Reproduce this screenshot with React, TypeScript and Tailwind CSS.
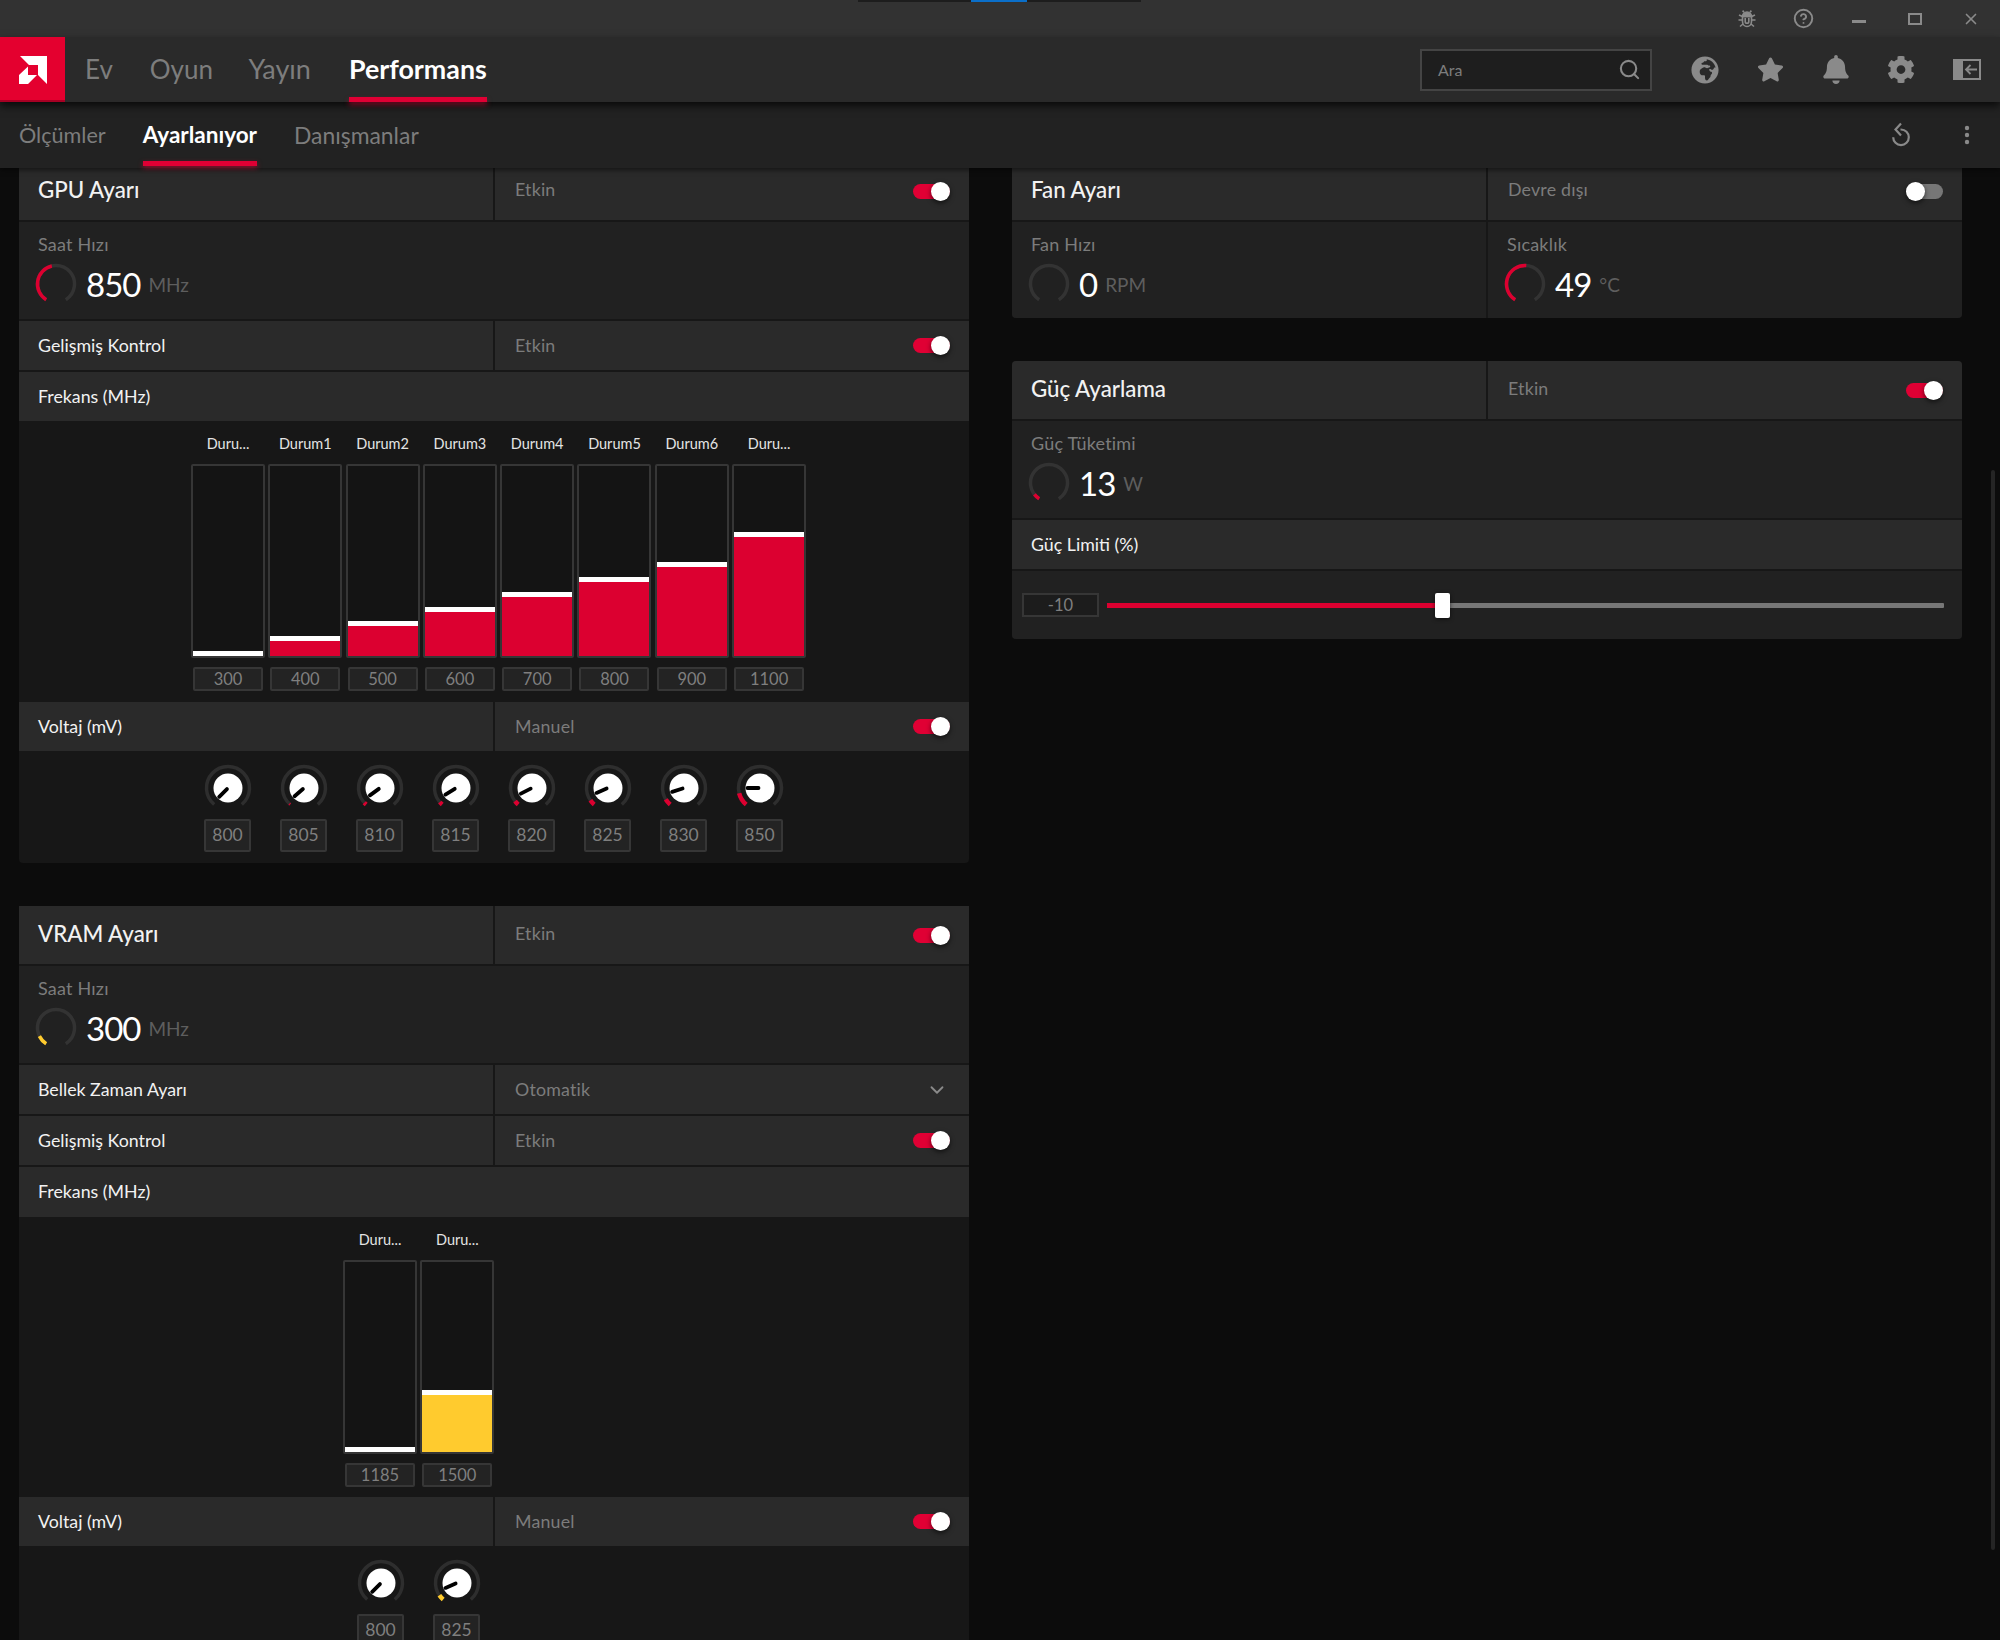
import React from "react";
import { Search, ChevronDown, CircleHelp, X } from "lucide-react";
import { FaGlobeAfrica, FaStar, FaBell, FaCog } from "react-icons/fa";

const polar = (cx: number, cy: number, r: number, deg: number) => {
  const a = ((deg - 90) * Math.PI) / 180;
  return [cx + r * Math.cos(a), cy + r * Math.sin(a)];
};
const arc = (cx: number, cy: number, r: number, from: number, to: number) => {
  const [x1, y1] = polar(cx, cy, r, from);
  const [x2, y2] = polar(cx, cy, r, to);
  const large = to - from > 180 ? 1 : 0;
  return `M${x1} ${y1}A${r} ${r} 0 ${large} 1 ${x2} ${y2}`;
};

function Gauge({ sweep, color }: { sweep: number; color: string }) {
  return (
    <svg width="42" height="42" viewBox="0 0 42 42" className="shrink-0">
      <path d={arc(21, 21, 18.5, 212, 508)} fill="none" stroke="#333333" strokeWidth="3.5" />
      {sweep > 0 && <path d={arc(21, 21, 18.5, 212, 212 + sweep)} fill="none" stroke={color} strokeWidth="3.5" />}
    </svg>
  );
}

function Knob({ value, sweep, angle, color }: { value: string; sweep: number; angle: number; color: string }) {
  const [x1, y1] = polar(24, 24, 1.5, angle);
  const [x2, y2] = polar(24, 24, 12.5, angle);
  return (
    <div className="flex w-[47px] flex-col items-center">
      <svg width="48" height="48" viewBox="0 0 48 48" className="shrink-0">
        <path d={arc(24, 24, 21.5, 220, 500)} fill="none" stroke="#2e2e2e" strokeWidth="3.5" />
        {sweep > 0 && <path d={arc(24, 24, 21.5, 220, 220 + sweep)} fill="none" stroke={color} strokeWidth={sweep < 4 ? 2.5 : 4.5} />}
        <circle cx="24" cy="24" r="14.5" fill="#ffffff" />
        <line x1={x1} y1={y1} x2={x2} y2={y2} stroke="#000000" strokeWidth="3.8" strokeLinecap="round" />
      </svg>
      <div className="mt-[7px] flex h-[33px] w-[47px] items-center justify-center rounded-[2px] border-2 border-[#363636] bg-[#232323] text-[17.5px] text-[#7f7f7f]">
        {value}
      </div>
    </div>
  );
}

function Bar({ label, value, fill, color }: { label: string; value: string; fill: number; color: string }) {
  return (
    <div className="flex w-[74px] shrink-0 flex-col items-center">
      <div className="flex h-[20px] items-center text-[14.5px] text-[#e4e4e4]">{label}</div>
      <div className="mt-[10px] flex h-[194px] w-[74px] flex-col justify-end rounded-[2px] border-2 border-[#363636] bg-[#141414]">
        <div className="border-t-[5px] border-white" style={{ height: fill, background: color }} />
      </div>
      <div className="mt-[9px] flex h-[24px] w-[70px] items-center justify-center rounded-[2px] border-2 border-[#363636] bg-[#232323] text-[16.5px] text-[#7f7f7f]">
        {value}
      </div>
    </div>
  );
}

function Toggle({ on = true }: { on?: boolean }) {
  return (
    <div className={`flex h-[15px] w-[37px] items-center rounded-full ${on ? "justify-end bg-[#e00034]" : "justify-start bg-[#777777]"}`}>
      <div className="h-[19px] w-[19px] shrink-0 rounded-full bg-white shadow-[0_2px_5px_rgba(0,0,0,0.6)]" />
    </div>
  );
}

function Split({ title, status, big, h = "h-[49px]", right }: { title: string; status: string; big?: boolean; h?: string; right: React.ReactNode }) {
  return (
    <div className={`mb-[2px] flex ${h} shrink-0`}>
      <div className={`flex w-[474px] items-center bg-[#2a2a2a] pl-[19px] text-[#f2f2f2] ${big ? "pb-[2px] text-[22.3px] font-medium" : "pb-[1px] text-[17.8px]"}`}>{title}</div>
      <div className="ml-[2px] flex flex-1 items-center justify-between bg-[#2a2a2a] pl-[20px] pr-[19px] text-[17.8px] tracking-[0.2px] text-[#7c7c7c]">
        <span className={big ? "-mt-[3px]" : "-mt-[1px]"}>{status}</span>
        {right}
      </div>
    </div>
  );
}

function Stat({ label, value, unit, sweep, color, className = "" }: { label: string; value: string; unit: string; sweep: number; color: string; className?: string }) {
  return (
    <div className={`flex flex-col bg-[#212121] pt-[12px] ${className}`}>
      <div className="flex h-[20px] items-center pl-[19px] text-[18px] tracking-[0.2px] text-[#7c7c7c]">{label}</div>
      <div className="ml-[16px] mt-[9px] flex items-center">
        <Gauge sweep={sweep} color={color} />
        <span className="ml-[9px] text-[33px] leading-none tracking-[-1px] text-white">{value}</span>
        <span className="ml-[8px] text-[19px] leading-none text-[#5e5e5e]">{unit}</span>
      </div>
    </div>
  );
}

function Plain({ title, h = "h-[49px]" }: { title: string; h?: string }) {
  return <div className={`mb-[2px] flex ${h} shrink-0 items-center bg-[#2a2a2a] pb-[1px] pl-[19px] text-[17.8px] text-[#f2f2f2]`}>{title}</div>;
}

const RED = "#dc0030";
const YELLOW = "#ffcb2e";

const gpuBars = [
  ["Duru...", "300", 5],
  ["Durum1", "400", 20],
  ["Durum2", "500", 35],
  ["Durum3", "600", 49],
  ["Durum4", "700", 64],
  ["Durum5", "800", 79],
  ["Durum6", "900", 94],
  ["Duru...", "1100", 124],
] as const;

const gpuKnobs = [
  ["800", 0, 225],
  ["805", 3, 229],
  ["810", 7, 234],
  ["815", 9, 238],
  ["820", 12, 243],
  ["825", 15, 247],
  ["830", 18, 252],
  ["850", 36, 270],
] as const;

function AmdLogo() {
  return (
    <svg width="28" height="28" viewBox="0 0 28 28" fill="#ffffff">
      <path d="M1 0H28V28L19 19V9H10Z" />
      <path d="M9 10.5L0 19V28H9L18 19H9Z" />
    </svg>
  );
}

function BugIcon() {
  return (
    <svg width="20" height="20" viewBox="0 0 20 20" fill="none" stroke="#8a8a8a" strokeWidth="1.6">
      <path d="M5.5 7.5a4.5 4.5 0 0 1 9 0Z" fill="#8a8a8a" />
      <path d="M5.5 7.5h9v5a4.5 5 0 0 1-9 0Z" />
      <path d="M8.2 9v3.4a1.8 1.8 0 0 0 3.6 0V9" />
      <path d="M7 3.2L5.6 1.6M13 3.2l1.4-1.6M5.5 7.6L2 6M14.5 7.6L18 6M5.5 11H1.5M14.5 11H18.5M6 15l-3 2.5M14 15l3 2.5" />
    </svg>
  );
}

function PanelIcon() {
  return (
    <svg width="28" height="21" viewBox="0 0 28 21" fill="none">
      <rect x="1" y="1" width="26" height="19" stroke="#8a8a8a" strokeWidth="2" />
      <rect x="1" y="1" width="9" height="19" fill="#8a8a8a" />
      <path d="M24 10.5H13M17.5 6L13 10.5L17.5 15" stroke="#8a8a8a" strokeWidth="1.8" />
    </svg>
  );
}

function UndoIcon() {
  return (
    <svg width="20" height="26" viewBox="0 0 20 26" fill="none" stroke="#8a8a8a" strokeWidth="2.2">
      <path d="M9.5 7.5H10a7.8 7.8 0 1 1-7.8 7.8" />
      <path d="M10 1.5L4.5 7.5L10 13.5" />
    </svg>
  );
}

export default function App() {
  return (
    <div className="relative flex h-[1640px] w-[2000px] flex-col overflow-hidden bg-[#0c0c0c] font-['Lato',sans-serif]">
      {/* Title bar */}
      <div className="flex h-[37px] shrink-0 items-center justify-end bg-[#323232] text-[#8a8a8a]">
        <div className="mr-[1px] flex items-center">
          <span className="flex w-[56px] justify-center"><BugIcon /></span>
          <span className="flex w-[56px] justify-center"><CircleHelp size={21} strokeWidth={2.2} /></span>
          <span className="flex w-[56px] justify-center pt-[6px]"><span className="block h-[3px] w-[14px] bg-[#8a8a8a]" /></span>
          <span className="flex w-[56px] justify-center"><span className="block h-[12px] w-[14px] border-2 border-[#8a8a8a]" /></span>
          <span className="flex w-[56px] justify-center"><X size={18} strokeWidth={2.2} /></span>
        </div>
      </div>

      {/* Main nav */}
      <div className="relative z-20 flex h-[65px] shrink-0 items-center bg-[#2a2a2a] shadow-[0_4px_8px_rgba(0,0,0,0.7)]">
        <div className="flex h-[65px] w-[65px] shrink-0 items-center justify-center bg-[#e4002f] shadow-[inset_0_-2px_0_#a80024]">
          <AmdLogo />
        </div>
        <div className="ml-[20px] flex h-full items-center text-[26px] text-[#7d7d7d]">
          <span>Ev</span>
          <span className="ml-[37px]">Oyun</span>
          <span className="ml-[35.5px] text-[27px]">Yayın</span>
          <span className="relative ml-[38px] flex h-full items-center text-[26.8px] font-bold text-white">
            Performans
            <span className="absolute bottom-0 left-0 h-[5px] w-full bg-[#e00034] shadow-[0_3px_5px_rgba(224,0,52,0.5)]" />
          </span>
        </div>
        <div className="ml-auto flex items-center">
          <div className="flex h-[42px] w-[232px] items-center justify-between border-2 border-[#444444] bg-[#1e1e1e] pl-[16px] pr-[9px] text-[16px] text-[#7c7c7c]">
            <span>Ara</span>
            <Search size={23} strokeWidth={2.2} className="text-[#8a8a8a]" />
          </div>
          <div className="ml-[39px] flex items-center text-[#8a8a8a]">
            <span className="flex w-[28px] justify-center"><FaGlobeAfrica size={28} /></span>
            <span className="ml-[37px] flex w-[28px] justify-center"><FaStar size={27} /></span>
            <span className="ml-[38px] flex w-[28px] justify-center"><FaBell size={29} /></span>
            <span className="ml-[37px] flex w-[28px] justify-center"><FaCog size={29} /></span>
            <span className="ml-[38px] mr-[19px]"><PanelIcon /></span>
          </div>
        </div>
      </div>

      {/* Sub nav */}
      <div className="relative z-10 flex h-[66px] shrink-0 items-center bg-[#222222] pl-[19px] pr-[30px] text-[21.6px] text-[#7d7d7d] shadow-[0_2px_5px_rgba(0,0,0,0.5)]">
        <span>Ölçümler</span>
        <span className="relative ml-[37px] flex h-full items-center text-[22.5px] font-bold text-white">
          Ayarlanıyor
          <span className="absolute bottom-[2px] left-0 h-[5px] w-full bg-[#e00034] shadow-[0_2px_5px_rgba(224,0,52,0.6)]" />
        </span>
        <span className="ml-[37px] text-[22.9px]">Danışmanlar</span>
        <span className="ml-auto mr-[53px]"><UndoIcon /></span>
        <svg width="6" height="20" viewBox="0 0 6 20" fill="#8a8a8a">
          <circle cx="3" cy="3" r="2.2" />
          <circle cx="3" cy="10" r="2.2" />
          <circle cx="3" cy="17" r="2.2" />
        </svg>
      </div>

      {/* Content */}
      <div className="-mt-[6px] flex pl-[19px]">
        {/* Left column */}
        <div className="flex w-[950px] shrink-0 flex-col">
          <div className="flex flex-col rounded-[4px] bg-[#171717]">
            <Split big title="GPU Ayarı" status="Etkin" h="h-[58px]" right={<Toggle />} />
            <Stat label="Saat Hızı" value="850" unit="MHz" sweep={135} color={RED} className="mb-[2px] h-[97px]" />
            <Split title="Gelişmiş Kontrol" status="Etkin" right={<Toggle />} />
            <Plain title="Frekans (MHz)" />
            <div className="flex h-[279px] gap-[3.3px] pl-[172px] pt-[11px]">
              {gpuBars.map(([l, v, f], i) => (
                <Bar key={i} label={l} value={v} fill={f} color={RED} />
              ))}
            </div>
            <div className="flex h-[49px]">
              <div className="flex w-[474px] items-center bg-[#2a2a2a] pb-[1px] pl-[19px] text-[17.8px] text-[#f2f2f2]">Voltaj (mV)</div>
              <div className="ml-[2px] flex flex-1 items-center justify-between bg-[#2a2a2a] pl-[20px] pr-[19px] text-[17.8px] tracking-[0.2px] text-[#7c7c7c]">
                <span className="-mt-[1px]">Manuel</span>
                <Toggle />
              </div>
            </div>
            <div className="flex h-[112px] gap-[29px] pl-[185px] pt-[13px]">
              {gpuKnobs.map(([v, s, a]) => (
                <Knob key={v} value={v} sweep={s} angle={a} color={RED} />
              ))}
            </div>
          </div>

          <div className="mt-[43px] flex flex-col rounded-[4px] bg-[#171717]">
            <Split big title="VRAM Ayarı" status="Etkin" h="h-[58px]" right={<Toggle />} />
            <Stat label="Saat Hızı" value="300" unit="MHz" sweep={32} color={YELLOW} className="mb-[2px] h-[97px]" />
            <Split
              title="Bellek Zaman Ayarı"
              status="Otomatik"
              right={<ChevronDown size={22} strokeWidth={2} className="mr-[2px] text-[#8a8a8a]" />}
            />
            <Split title="Gelişmiş Kontrol" status="Etkin" right={<Toggle />} />
            <Plain title="Frekans (MHz)" h="h-[50px]" />
            <div className="flex h-[278px] gap-[3.3px] pl-[324px] pt-[11px]">
              <Bar label="Duru..." value="1185" fill={5} color={RED} />
              <Bar label="Duru..." value="1500" fill={62} color={YELLOW} />
            </div>
            <div className="flex h-[49px]">
              <div className="flex w-[474px] items-center bg-[#2a2a2a] pb-[1px] pl-[19px] text-[17.8px] text-[#f2f2f2]">Voltaj (mV)</div>
              <div className="ml-[2px] flex flex-1 items-center justify-between bg-[#2a2a2a] pl-[20px] pr-[19px] text-[17.8px] tracking-[0.2px] text-[#7c7c7c]">
                <span className="-mt-[1px]">Manuel</span>
                <Toggle />
              </div>
            </div>
            <div className="flex h-[112px] gap-[29px] pl-[338px] pt-[13px]">
              <Knob value="800" sweep={0} angle={225} color={YELLOW} />
              <Knob value="825" sweep={15} angle={247} color={YELLOW} />
            </div>
          </div>
        </div>

        {/* Right column */}
        <div className="ml-[43px] flex w-[950px] shrink-0 flex-col">
          <div className="flex flex-col overflow-hidden rounded-[4px] bg-[#171717]">
            <Split big title="Fan Ayarı" status="Devre dışı" h="h-[58px]" right={<Toggle on={false} />} />
            <div className="flex h-[96px]">
              <Stat label="Fan Hızı" value="0" unit="RPM" sweep={0} color={RED} className="w-[474px]" />
              <Stat label="Sıcaklık" value="49" unit="°C" sweep={152} color={RED} className="ml-[2px] flex-1" />
            </div>
          </div>

          <div className="mt-[43px] flex flex-col overflow-hidden rounded-[4px] bg-[#171717]">
            <Split big title="Güç Ayarlama" status="Etkin" h="h-[58px]" right={<Toggle />} />
            <Stat label="Güç Tüketimi" value="13" unit="W" sweep={20} color={RED} className="mb-[2px] h-[97px]" />
            <Plain title="Güç Limiti (%)" />
            <div className="flex h-[68px] items-center bg-[#212121] pl-[10px] pr-[18px]">
              <div className="flex h-[24px] w-[77px] shrink-0 items-center justify-center border-2 border-[#363636] bg-[#1c1c1c] text-[16.5px] text-[#7f7f7f]">-10</div>
              <div className="relative ml-[8px] flex h-[5px] flex-1 rounded-[1px] bg-[#777777]">
                <div className="h-full w-[39.8%] bg-[#dc0030]" />
                <div className="absolute -top-[10px] left-[39.2%] h-[25px] w-[15px] rounded-[2px] bg-white shadow-[0_1px_4px_rgba(0,0,0,0.6)]" />
              </div>
            </div>
          </div>
        </div>
      </div>

      {/* Window drag strip and scrollbar lie over everything else */}
      <div className="absolute left-[858px] top-0 h-[2px] w-[283px] bg-[#1d1d1d]">
        <div className="absolute left-[113px] top-0 h-[2px] w-[56px] bg-[#0b6fc9]" />
      </div>
      <div className="absolute left-[1991px] top-[470px] h-[1080px] w-[4px] rounded-full bg-[#252525]" />
    </div>
  );
}
